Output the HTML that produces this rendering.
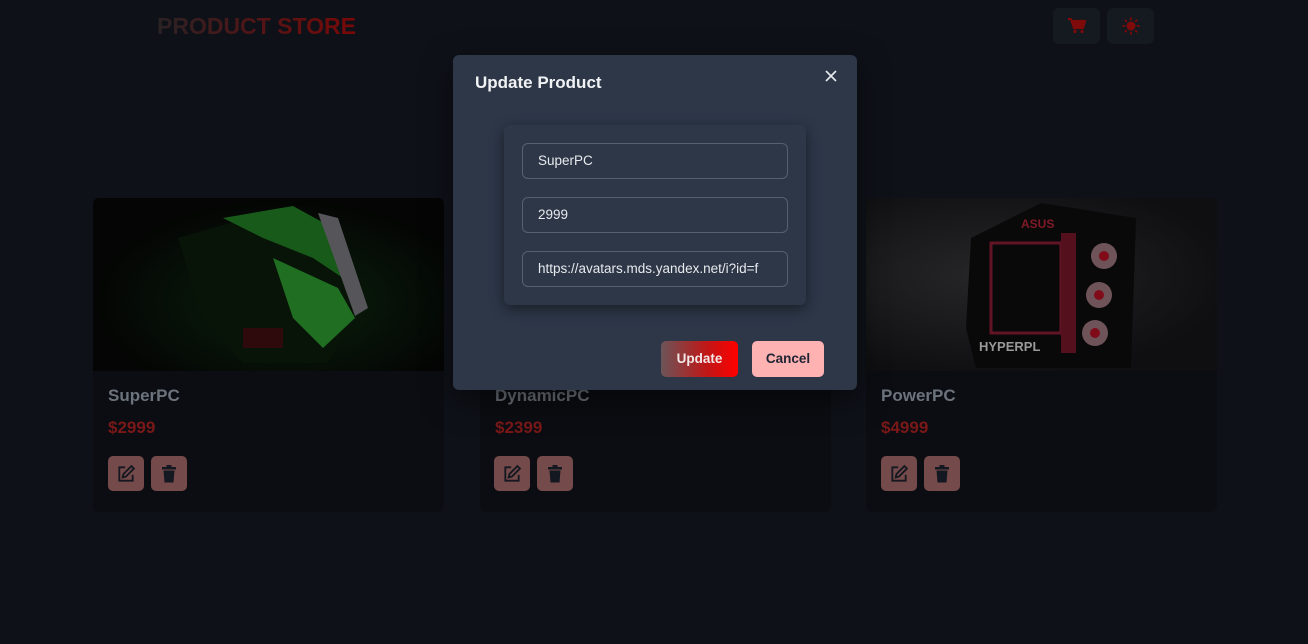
<!DOCTYPE html>
<html><head><meta charset="utf-8"><style>
*{box-sizing:border-box;margin:0;padding:0}
body{width:1308px;height:644px;background:#0e1118;font-family:"Liberation Sans",sans-serif;position:relative;overflow:hidden}
.logo{position:absolute;left:157px;top:13px;font-size:23px;font-weight:bold;background:linear-gradient(90deg,#2a2224,#7a0808);-webkit-background-clip:text;color:transparent;letter-spacing:0}
.hb{position:absolute;top:8px;width:47px;height:36px;background:#151920;border-radius:6px;display:flex;align-items:center;justify-content:center}
.card{position:absolute;top:198px;width:351px;height:314px;background:#0b0d12;border-radius:6px;overflow:hidden}
.img{height:173px;position:relative;overflow:hidden}
.card h3{position:absolute;left:15px;top:188px;font-size:17px;color:#6c737c;font-weight:bold}
.card .p{position:absolute;left:15px;top:220px;font-size:17px;color:#7a1818;font-weight:bold}
.btn{position:absolute;top:258px;width:36px;height:35px;background:#754a4a;border-radius:5px;display:flex;align-items:center;justify-content:center}
.modal{position:absolute;left:453px;top:55px;width:404px;height:335px;background:#2d3748;border-radius:6px;box-shadow:0 10px 30px rgba(0,0,0,.5)}
.modal h2{position:absolute;left:22px;top:18px;font-size:17px;color:#f1f2f4;font-weight:bold}
.x{position:absolute;left:371px;top:14px}
.form{position:absolute;left:51px;top:70px;width:302px;height:180px;background:#2d3748;border-radius:6px;box-shadow:0 4px 14px rgba(0,0,0,.45)}
.in{position:absolute;left:18px;width:266px;height:36px;border:1px solid #56606f;border-radius:6px;color:#e8eaed;font-size:13.5px;padding-left:15px;line-height:34px;white-space:nowrap;overflow:hidden}
.ub{position:absolute;left:208px;top:286px;width:77px;height:36px;border-radius:5px;background:linear-gradient(90deg,#6b5558,#c21616 60%,#ff0000);color:#f3e8e8;font-size:13.5px;font-weight:bold;text-align:center;line-height:36px}
.cb{position:absolute;left:299px;top:286px;width:72px;height:36px;border-radius:5px;background:#feb2b2;color:#1e2433;font-size:13.5px;font-weight:bold;text-align:center;line-height:36px}
</style></head><body>
<div class="logo">PRODUCT STORE</div>
<div class="hb" style="left:1053px"><svg width="18" height="16" viewBox="0 0 18 16"><path d="M0 1h3l3 9h9l2-7H4" fill="none" stroke="#7e0a0a" stroke-width="2.2"/><rect x="5" y="3" width="11" height="6" fill="#7e0a0a"/><circle cx="7" cy="13.5" r="1.6" fill="#7e0a0a"/><circle cx="14" cy="13.5" r="1.6" fill="#7e0a0a"/></svg></div>
<div class="hb" style="left:1107px"><svg width="18" height="18" viewBox="0 0 18 18"><circle cx="9" cy="9" r="4.5" fill="#7e0a0a"/><g stroke="#7e0a0a" stroke-width="1.8" stroke-linecap="round"><path d="M9 1v1.5M9 15.5V17M1 9h1.5M15.5 9H17M3.3 3.3l1 1M13.7 13.7l1 1M3.3 14.7l1-1M13.7 4.3l1-1"/></g></svg></div>

<div class="card" style="left:93px"><div class="img" style="background:radial-gradient(ellipse at 55% 60%,#0a200c,#040504 70%)"><svg width="351" height="173"><polygon points="85,40 190,10 230,25 265,110 235,165 150,165 110,120" fill="#081408"/><polygon points="130,20 200,8 240,30 250,80 220,60 170,40" fill="#185a1a"/><polygon points="180,60 245,90 262,120 230,150 200,120" fill="#1f6e21"/><polygon points="225,15 245,20 275,110 262,118" fill="#55555a"/><rect x="150" y="130" width="40" height="20" fill="#2e0a0d"/></svg></div><h3>SuperPC</h3><div class="p">$2999</div>
<div class="btn" style="left:15px"><svg width="20" height="20" viewBox="0 0 24 24" fill="none" stroke="#141820" stroke-width="2.2"><path d="M11 4H4v16h16v-7"/><path d="M18.5 2.5l3 3L12 15l-4 1 1-4z"/></svg></div>
<div class="btn" style="left:58px"><svg width="16" height="18" viewBox="0 0 16 18"><rect x="1" y="2" width="14" height="2.5" fill="#141820"/><rect x="5.5" y="0" width="5" height="2.5" fill="#141820"/><path d="M2.5 5.5h11l-1 12h-9z" fill="#141820"/></svg></div></div>

<div class="card" style="left:480px"><div class="img" style="background:#0e0e0e"></div><h3>DynamicPC</h3><div class="p">$2399</div>
<div class="btn" style="left:14px"><svg width="20" height="20" viewBox="0 0 24 24" fill="none" stroke="#141820" stroke-width="2.2"><path d="M11 4H4v16h16v-7"/><path d="M18.5 2.5l3 3L12 15l-4 1 1-4z"/></svg></div>
<div class="btn" style="left:57px"><svg width="16" height="18" viewBox="0 0 16 18"><rect x="1" y="2" width="14" height="2.5" fill="#141820"/><rect x="5.5" y="0" width="5" height="2.5" fill="#141820"/><path d="M2.5 5.5h11l-1 12h-9z" fill="#141820"/></svg></div></div>

<div class="card" style="left:866px"><div class="img" style="background:radial-gradient(ellipse at 35% 45%,#262628,#0f0f11 75%)"><svg width="351" height="173"><polygon points="105,40 175,5 270,20 265,170 110,170 100,130" fill="#09090a"/><rect x="125" y="45" width="70" height="90" fill="none" stroke="#621424" stroke-width="3"/><rect x="195" y="35" width="15" height="120" fill="#55101d"/><circle cx="238" cy="58" r="13" fill="#6e5458"/><circle cx="233" cy="97" r="13" fill="#6e5458"/><circle cx="229" cy="135" r="13" fill="#6e5458"/><circle cx="238" cy="58" r="5" fill="#800c1a"/><circle cx="233" cy="97" r="5" fill="#800c1a"/><circle cx="229" cy="135" r="5" fill="#800c1a"/><text x="113" y="153" font-size="13" fill="#999" font-family="Liberation Sans" font-weight="bold">HYPERPL</text><text x="155" y="30" font-size="12" fill="#801a26" font-family="Liberation Sans" font-weight="bold">ASUS</text></svg></div><h3>PowerPC</h3><div class="p">$4999</div>
<div class="btn" style="left:15px"><svg width="20" height="20" viewBox="0 0 24 24" fill="none" stroke="#141820" stroke-width="2.2"><path d="M11 4H4v16h16v-7"/><path d="M18.5 2.5l3 3L12 15l-4 1 1-4z"/></svg></div>
<div class="btn" style="left:58px"><svg width="16" height="18" viewBox="0 0 16 18"><rect x="1" y="2" width="14" height="2.5" fill="#141820"/><rect x="5.5" y="0" width="5" height="2.5" fill="#141820"/><path d="M2.5 5.5h11l-1 12h-9z" fill="#141820"/></svg></div></div>

<div class="modal">
<h2>Update Product</h2>
<svg class="x" width="14" height="14" viewBox="0 0 14 14"><path d="M2 2l10 10M12 2L2 12" stroke="#e8eaed" stroke-width="1.6"/></svg>
<div class="form">
<div class="in" style="top:18px">SuperPC</div>
<div class="in" style="top:72px">2999</div>
<div class="in" style="top:126px">https://avatars.mds.yandex.net/i?id=f</div>
</div>
<div class="ub">Update</div>
<div class="cb">Cancel</div>
</div>
</body></html>
